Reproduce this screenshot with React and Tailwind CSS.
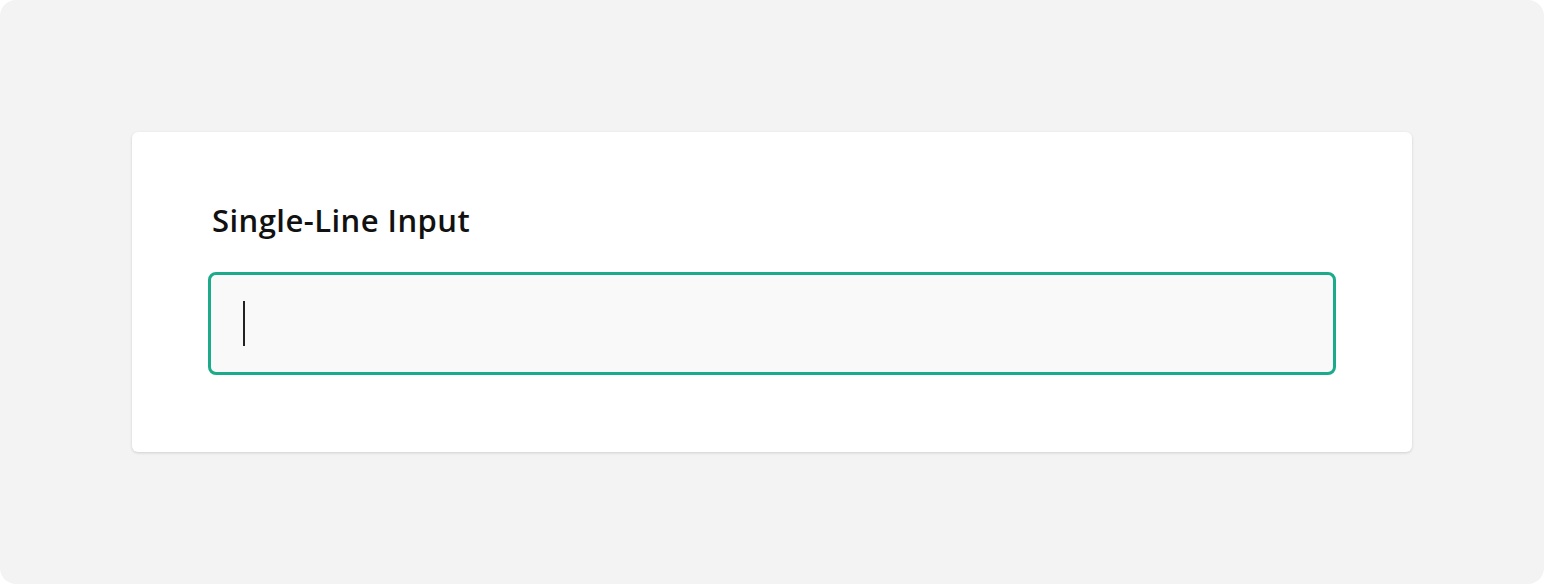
export default function App() {
  return (
    <div className="w-[1544px] h-[584px] bg-white">
      <div
        className="w-full h-full rounded-[16px] bg-[#f3f3f3] pt-[132px] pl-[132px]"
        style={{ fontFamily: '"Open Sans", "Noto Sans", sans-serif' }}
      >
        <div className="w-[1280px] h-[320px] bg-white rounded-[6px] shadow-[0_1px_3px_rgba(0,0,0,0.15)] px-[76px] pt-[68px]">
          <label className="block pl-[4px] text-[31px] leading-[40px] font-semibold text-[#111] tracking-[0.45px]">
            Single-Line Input
          </label>
          <div className="mt-[32px] h-[103px] rounded-[8px] border-[3px] border-[#1bab8a] bg-[#f9f9f9] flex items-center pl-[32px]">
            <span className="block w-[2px] h-[45px] bg-[#222]"></span>
          </div>
        </div>
      </div>
    </div>
  );
}
